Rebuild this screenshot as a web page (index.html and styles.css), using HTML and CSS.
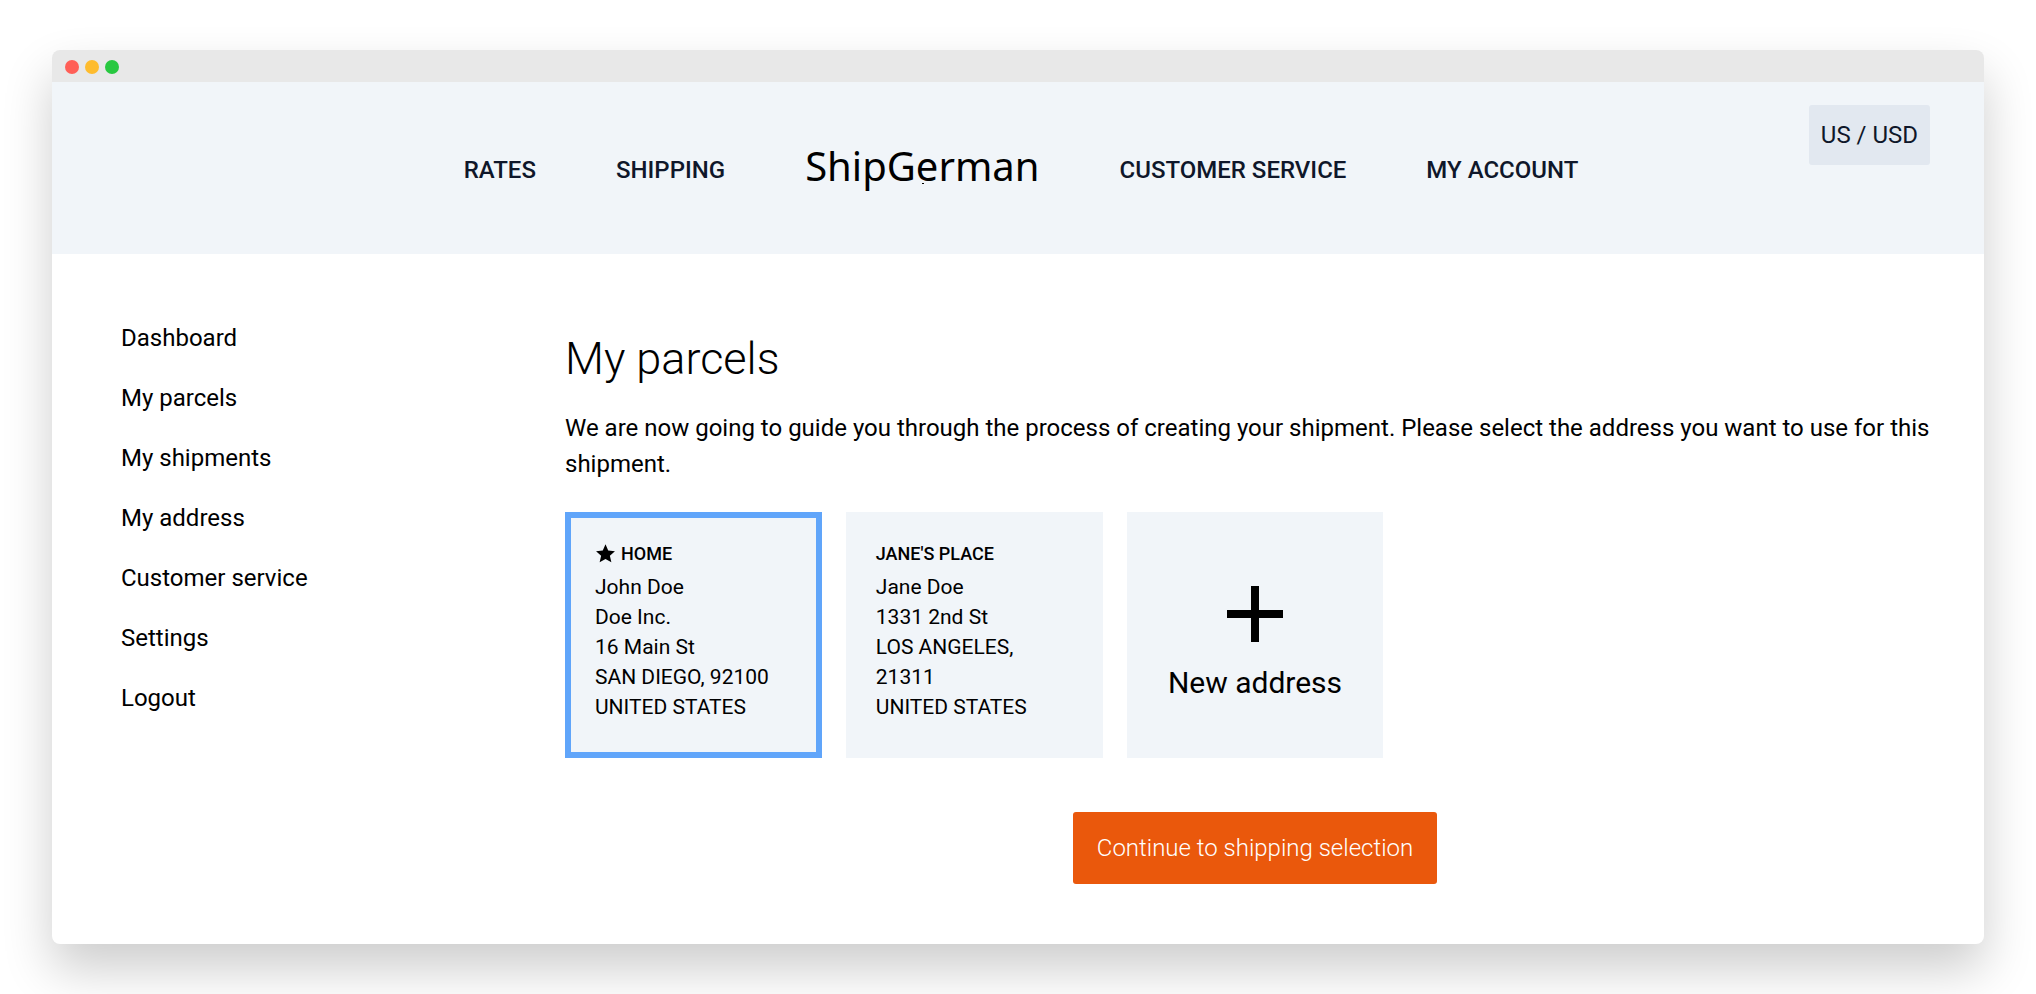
FILE: index.html
```html
<!DOCTYPE html>
<html lang="en">
<head>
  <meta charset="UTF-8">
  <meta name="viewport" content="width=device-width, initial-scale=1.0">
  <title>ShipGerman - My parcels</title>
  <link rel="stylesheet" href="styles.css">
</head>
<body>

  <div class="window">
    <div class="titlebar">
      <span class="dot dot-red"></span>
      <span class="dot dot-yellow"></span>
      <span class="dot dot-green"></span>
    </div>

    <header class="header">
      <nav class="nav">
        <a href="#">RATES</a>
        <a href="#">SHIPPING</a>
        <a href="#" class="logo">ShipGerman</a>
        <a href="#">CUSTOMER SERVICE</a>
        <a href="#">MY ACCOUNT</a>
      </nav>
      <button type="button" class="region">US / USD</button>
    </header>

    <div class="layout">
      <aside class="sidebar">
        <a href="#">Dashboard</a>
        <a href="#">My parcels</a>
        <a href="#">My shipments</a>
        <a href="#">My address</a>
        <a href="#">Customer service</a>
        <a href="#">Settings</a>
        <a href="#">Logout</a>
      </aside>

      <main class="content">
        <h1>My parcels</h1>
        <p class="intro">We are now going to guide you through the process of creating your shipment. Please select the address you want to use for this shipment.</p>

        <form class="address-form">
          <div class="cards">
            <label class="card">
              <input type="radio" name="address" value="home" checked>
              <span class="card-title">
                <svg class="star" viewBox="0 0 24 24"><path d="M12 .3l3.1 7.2 7.7.7-5.8 5.2 1.7 7.5L12 17l-6.7 3.9L7 13.4 1.2 8.2l7.7-.7z"/></svg>
                HOME
              </span>
              <span>John Doe</span>
              <span>Doe Inc.</span>
              <span>16 Main St</span>
              <span>SAN DIEGO, 92100</span>
              <span>UNITED STATES</span>
            </label>

            <label class="card">
              <input type="radio" name="address" value="jane">
              <span class="card-title">JANE'S PLACE</span>
              <span>Jane Doe</span>
              <span>1331 2nd St</span>
              <span>LOS ANGELES, 21311</span>
              <span>UNITED STATES</span>
            </label>

            <button type="button" class="card-new">
              <svg class="plus" viewBox="0 0 24 24"><path d="M19 13h-6v6h-2v-6H5v-2h6V5h2v6h6z"/></svg>
              New address
            </button>
          </div>

          <button type="submit" class="btn">Continue to shipping selection</button>
        </form>
      </main>
    </div>
  </div>

</body>
</html>
```

FILE: styles.css
```css
* {
  box-sizing: border-box;
}
body {
  margin: 0;
  padding: 50px 52px;
  background: #fff;
  color: #000;
  font-family: Roboto, sans-serif;
  font-size: 24px;
  line-height: 36px;
}
a {
  color: inherit;
  text-decoration: none;
}
button {
  border: none;
  color: inherit;
  font: inherit;
  cursor: pointer;
}

/* window frame */
.window {
  border-radius: 8px;
  background: #fff;
  box-shadow: 0 25px 50px rgba(0, 0, 0, 0.2);
}
.titlebar {
  display: flex;
  align-items: center;
  gap: 6px;
  height: 32px;
  padding: 2px 13px 0;
  border-radius: 8px 8px 0 0;
  background: #e8e8e8;
}
.dot {
  width: 14px;
  height: 14px;
  border-radius: 50%;
}
.dot-red {
  background: #ff5f57;
}
.dot-yellow {
  background: #febc2e;
}
.dot-green {
  background: #28c840;
}

/* header */
.header {
  display: grid;
  grid-template-columns: 1fr auto 1fr;
  min-height: 172px;
  padding: 0 54px 0 60px;
  background: #f1f5f9;
  color: #0f172a;
}
.nav {
  grid-column: 2;
  display: flex;
  align-items: center;
  gap: 80px;
  padding-top: 4px;
  font-weight: 500;
}
.logo {
  position: relative;
  padding-bottom: 8px;
  color: #000;
  font-family: "Noto Sans", sans-serif;
  font-size: 40px;
  font-weight: 400;
}
.logo::after {
  content: "";
  position: absolute;
  left: 50%;
  bottom: 8px;
  width: 2px;
  height: 1px;
  background: #000;
}
.region {
  justify-self: end;
  align-self: start;
  margin-top: 23px;
  padding: 12px;
  border-radius: 3px;
  background: #e2e8f0;
}

/* page body */
.layout {
  display: grid;
  grid-template-columns: 1fr 3fr;
  padding: 54px 39px 60px 53px;
}
.sidebar a {
  display: block;
  padding: 12px 16px;
}
.content {
  padding-top: 24px;
}
h1 {
  margin: 0 0 24px;
  font-size: 45px;
  font-weight: 300;
  line-height: 54px;
}
.intro {
  margin: 0 0 30px;
}

/* address cards */
.cards {
  display: grid;
  grid-template-columns: repeat(5, 1fr);
  gap: 24px;
  margin-bottom: 54px;
}
.card {
  display: flex;
  flex-direction: column;
  padding: 24px 24px 30px;
  border: 6px solid #f1f5f9;
  background: #f1f5f9;
  font-size: 21px;
  line-height: 30px;
  cursor: pointer;
}
.card:has(input:checked) {
  border-color: #60a5fa;
}
.card input {
  position: absolute;
  opacity: 0;
}
.card-title {
  display: flex;
  align-items: center;
  gap: 5px;
  margin-bottom: 6px;
  font-size: 18px;
  font-weight: 500;
  line-height: 24px;
}
.star {
  width: 21px;
  height: 21px;
}
.card-new {
  display: flex;
  flex-direction: column;
  align-items: center;
  justify-content: center;
  padding: 0;
  background: #f1f5f9;
  font-size: 30px;
  line-height: 42px;
}
.plus {
  width: 96px;
  height: 96px;
}
.btn {
  display: block;
  margin: 0 auto;
  padding: 18px 24px;
  border-radius: 3px;
  background: #ea580c;
  color: #fff;
  font-weight: 300;
}
```
